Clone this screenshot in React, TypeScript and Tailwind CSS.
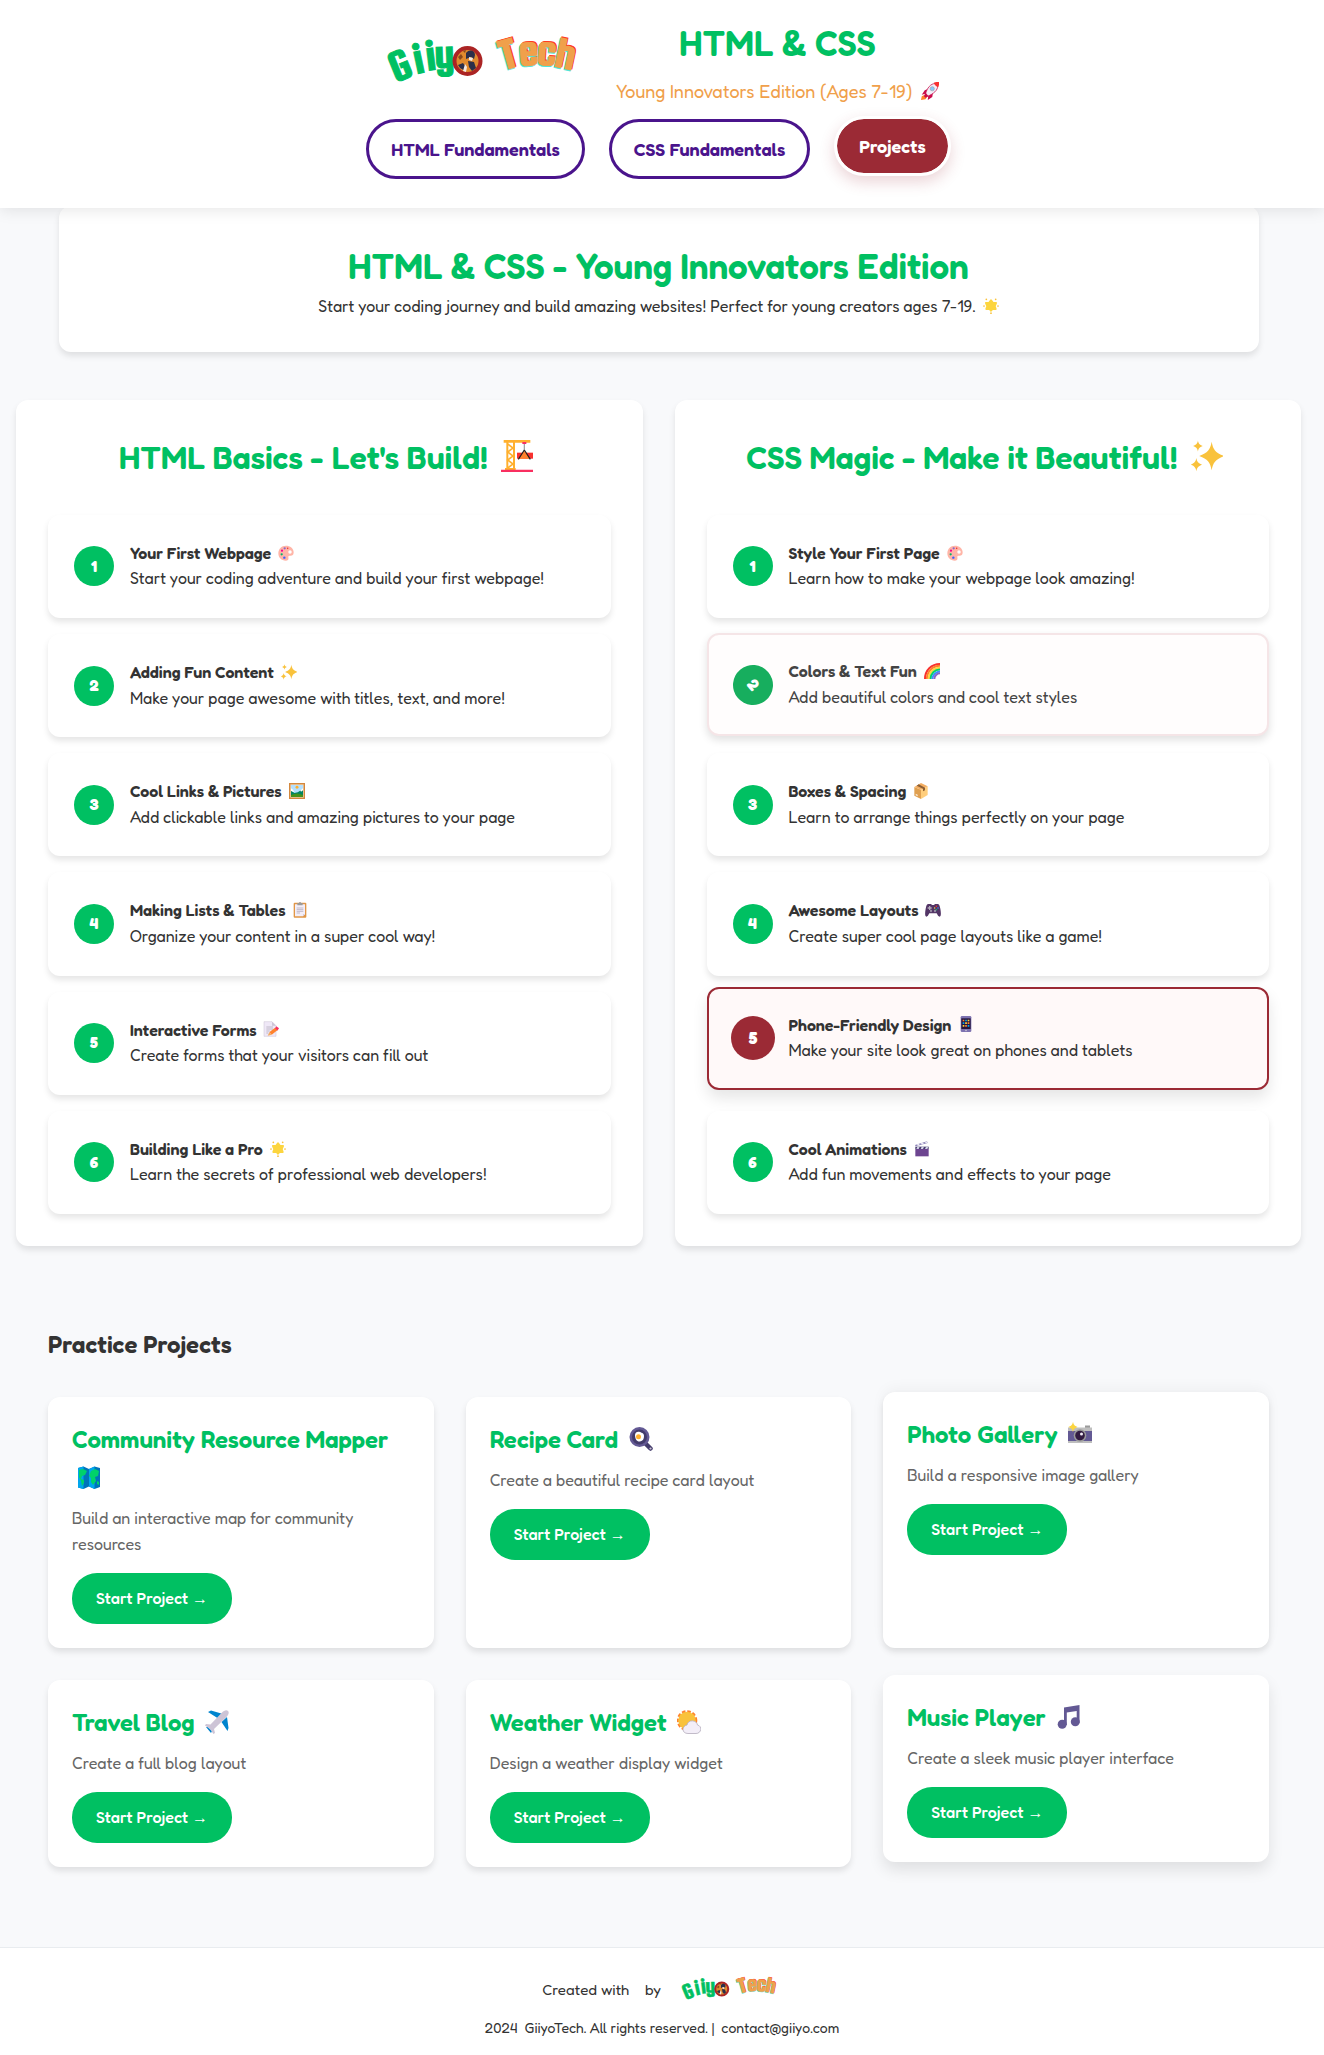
import React from 'react';
import type { ReactNode } from 'react';

const Sparkle = ({ x, y, r, fill = '#f9c23c' }: { x: number; y: number; r: number; fill?: string }) => (
  <path
    fill={fill}
    transform={`translate(${x} ${y}) scale(${r})`}
    d="M0-1.1C.12-.45.3-.27.95 0 .3.27.12.45 0 1.1-.12.45-.3.27-.95 0-.3-.27-.12-.45 0-1.1Z"
  />
);

const drawings: Record<string, ReactNode> = {
  rocket: (
    <>
      <path fill="#ca0b4a" d="M10 9 5 11l-4 6 7-2zM16 14l-1 6-6 4 1-8z" />
      <path fill="#ff822d" d="M5 17 1 19 0 24l6-1 2-3z" />
      <path fill="#f3eef8" stroke="#ca0b4a" strokeWidth="1" d="M6 16C8 8 13 2 19 2l3 3c1 6-6 11-13 14z" />
      <path fill="#f8312f" d="M17 1c3-1 6-1.500 7-1 .5 1 .3 4-1 7-3-1-5-3-6-6z" />
      <path fill="#ca0b4a" d="m6 14 4 5-4 2-2-2z" />
      <circle cx="15" cy="9" r="2.800" fill="#83cbff" stroke="#9b9b9b" strokeWidth=".8" />
    </>
  ),
  star: (
    <>
      <path fill="#fcd53f" stroke="#fcd53f" strokeWidth="3" strokeLinejoin="round" d="m12 3.500 2.500 3.500 5 .5-2 4.500 1.500 4.500-4.500-.5L12 19l-2.500-3-4.500.5L6.500 12l-2-4.500 5-.5z" />
      <g fill="#f9c23c">
        <circle cx="5" cy="2" r="1.300" /><circle cx="19" cy="2" r="1.300" />
        <circle cx="1.500" cy="12" r="1.300" /><circle cx="22.500" cy="12" r="1.300" />
        <circle cx="12" cy="22.700" r="1.300" />
      </g>
    </>
  ),
  crane: (
    <>
      <path fill="#ffb02e" d="M2 0h20v2H2zM3 21h8v2H3zM4 2h1.500v19H4zM9 2h1.500v19H9z" />
      <path fill="none" stroke="#ffb02e" strokeWidth="1.200" d="m5 3 4 3-4 3 4 3-4 3 4 3-4 3" />
      <path fill="#f92f60" d="M0 22.300h24V24H0zM16 1.500h3V3h-3z" />
      <path fill="none" stroke="#9b9b9b" strokeWidth=".9" d="M17.500 3v5" />
      <path fill="#f8312f" d="M12 9.500h12v4.500H12z" />
      <path fill="#ff822d" d="m17.500 8 4 6h-8z" />
      <path fill="none" stroke="#212121" strokeWidth=".9" d="m17.500 7.500-4.500 7M17.500 7.500l4.500 7" />
    </>
  ),
  sparkles: (
    <>
      <Sparkle x={15.5} y={12} r={9.800} />
      <Sparkle x={5.200} y={4.500} r={3.800} />
      <Sparkle x={4} y={18.500} r={4.500} />
    </>
  ),
  palette: (
    <>
      <path fill="#ffb5a7" d="M12 1C5 1 .5 6 .5 12.500S5 23.500 12 23.500c4 0 4-3 3.500-5s1-2.500 3.500-2.500 4.500-1 4.500-5C23.500 5 18 1 12 1z" />
      <circle cx="18" cy="10.500" r="2.600" fill="#fff" />
      <circle cx="10" cy="5" r="1.700" fill="#8d65c5" /><circle cx="6" cy="8.500" r="1.700" fill="#f70a8d" />
      <circle cx="5.500" cy="14" r="1.700" fill="#00b26b" /><circle cx="9.500" cy="19" r="1.800" fill="#3f5fff" />
      <circle cx="14.500" cy="5" r="1.200" fill="#f8312f" />
    </>
  ),
  picture: (
    <>
      <path fill="#d3883e" d="M0 0h24v24H0z" />
      <path fill="#f3d6b0" d="M2 2h20v20H2z" />
      <path fill="#b4e0ff" d="M3 3h18v18H3z" />
      <circle cx="12" cy="6.500" r="2.200" fill="#ffb02e" />
      <path fill="#008463" d="m3 11 5 4 5-1 8-5v12H3z" />
      <path fill="#44911b" d="M3 18c6-3 12-3 18 0v3H3z" />
      <path fill="#fff" d="m3 8 3 2 2 4-5-2zM21 8l-4 3 1 2 3-2z" />
    </>
  ),
  clipboard: (
    <>
      <rect x="2.500" y="1" width="19" height="22.500" rx="1.500" fill="#e19747" />
      <path fill="#f3eef8" d="M4.500 3.500h15v15l-3 3h-12z" />
      <path fill="#cdc4d6" d="M16.500 21.500v-3h3z" />
      <path fill="#9b9b9b" d="M8 1.500h2.500a1.500 1.500 0 0 1 3 0H16V5H8z" />
      <g stroke="#b4acbc" strokeWidth="1.200"><path d="M7 9h10M7 11.500h10M7 14h10M7 16.500h5" /></g>
    </>
  ),
  memo: (
    <>
      <path fill="#efe8f7" stroke="#cdc4d6" strokeWidth=".8" d="M1.500 1h12l6 6v16h-18z" />
      <path fill="#cdc4d6" d="M13.500 1v6h6z" />
      <g stroke="#b4acbc" strokeWidth="1.200"><path d="M5 9h10M5 12h10M5 15h5M5 18h3" /></g>
      <path fill="#f92f60" d="m20 8 4 3-2.500 3.500-4-3z" />
      <path fill="#ff822d" d="m17.500 10.500 4 3.500-8.500 6.500-3.500-3.500z" />
      <path fill="#f3ad61" d="m9.500 17 3.500 3.500L7 22z" />
    </>
  ),
  rainbow: (
    <g fill="none" strokeWidth="3">
      <path stroke="#f8312f" d="M1.500 24C1.500 11 11 1.500 24 1.500" />
      <path stroke="#ff822d" d="M4.300 24C4.300 13 13 4.300 24 4.300" />
      <path stroke="#fcd53f" d="M7.100 24C7.100 14.500 14.500 7.100 24 7.100" />
      <path stroke="#00d26a" d="M9.900 24C9.900 16 16 9.900 24 9.900" />
      <path stroke="#3f8cff" d="M12.700 24C12.700 18 18 12.700 24 12.700" />
      <path stroke="#8d65c5" d="M15.500 24C15.500 19.500 19.500 15.500 24 15.500" />
    </g>
  ),
  box: (
    <>
      <path fill="#e0a050" d="m2 6 10 4v14L2 19z" />
      <path fill="#ffce7c" d="m12 10 10-5v13l-10 6z" />
      <path fill="#f3ad61" d="m2 6 10-6 10 5-10 5z" />
      <path fill="#8b5e34" d="m5.500 4 3-2 9.500 5v4l-3 1.500V8.500z" />
      <path fill="#fff" opacity=".8" d="m4 16 3 1.500V20l-3-1.500z" />
    </>
  ),
  gamepad: (
    <>
      <path fill="#533566" d="M5 3h4l1.500 1.500h3L15 3h4c2 0 3 2 4 7s1.500 12-1 12c-2 0-3-2-4.500-5h-11C5 20 4 22 2 22c-2.500 0-2-7-1-12s2-7 4-7z" />
      <path fill="#b4acbc" d="M6 6h2v2h2v2H8v2H6v-2H4V8h2z" />
      <circle cx="17" cy="6.500" r="1.100" fill="#f8312f" /><circle cx="19.500" cy="9" r="1.100" fill="#3f8cff" />
      <circle cx="14.500" cy="9" r="1.100" fill="#fcd53f" /><circle cx="17" cy="11.500" r="1.100" fill="#00d26a" />
      <circle cx="9" cy="13.500" r="1.700" fill="#998ea4" /><circle cx="15" cy="13.500" r="1.700" fill="#998ea4" />
    </>
  ),
  phone: (
    <>
      <rect x="4" y="0" width="16" height="24" rx="2" fill="#7d72b0" />
      <path fill="#26153c" d="M5 3.500h14v16H5z" />
      <g fill="#ff822d"><path d="M7 5.500h2.500V8H7zM14.500 9.500H17V12h-2.500zM10.800 13.500h2.500V16h-2.500z" /></g>
      <g fill="#00a6ed"><path d="M10.800 5.500h2.500V8h-2.500zM7 9.500h2.500V12H7zM14.500 13.500H17V16h-2.500z" /></g>
      <g fill="#fcd53f"><path d="M14.500 5.500H17V8h-2.500zM10.800 9.500h2.500V12h-2.500zM7 13.500h2.500V16H7z" /></g>
      <circle cx="12" cy="21.700" r="1.200" fill="#cdc4d6" />
    </>
  ),
  clapper: (
    <>
      <path fill="#6d4590" d="M2 12h20v11H2z" />
      <path fill="#433b6b" d="M2 8.500h20V12H2z" />
      <path fill="#d3d3e8" d="M5 8.500h3.500L7 12H3.500zM11.500 8.500H15L13.500 12H10zM18 8.500h3.500L20 12h-3.500z" />
      <path fill="#8d84b8" d="m1.500 6 18-5.500 1 2.500L2.500 8z" />
      <path fill="#ececf6" d="m4 5.200 3-1 2 2-3 .9zM10 3.400l3-1 2 2-3 .9zM16 1.600l3-1 1 2.200-2 .6z" />
    </>
  ),
  map: (
    <>
      <path fill="#0074ba" d="m1 2 5.500-1.500L12 3l5.500-2.500L23 2v19l-5.500 2-5.500-2.500L6.500 23 1 21.500z" />
      <path fill="#00a6ed" d="m1 2 5.500-1.500V23L1 21.500zM12 3l5.500-2.500V23L12 20.500z" />
      <path fill="#00d26a" d="m2 4 4-1 4 2-2 4-3 1-1 3 3 1v3l-2 3-1-5-2-4zM14 5l4-2 4 2-1 5-3 1 1 4-3 4-2-3v-4l-2-2zM20 15l2 1v3l-2-1z" />
    </>
  ),
  pan: (
    <>
      <path stroke="#433b6b" strokeWidth="4.500" strokeLinecap="round" d="m16 16 5.500 5.500" />
      <circle cx="10.500" cy="10" r="10" fill="#635994" />
      <circle cx="10.500" cy="10" r="7.500" fill="#433b6b" />
      <path fill="#fff" d="M6 8c0-3 3-4 5-3s4 1 4 4-1 5-4 5.500S6 12 6 8z" />
      <circle cx="9.500" cy="9.800" r="2.500" fill="#ffb02e" />
      <circle cx="21.500" cy="21.500" r="1.100" fill="#cdc4d6" />
    </>
  ),
  camera: (
    <>
      <path fill="#9b9b9b" d="M17 3.500h5V6h-5z" />
      <path fill="#bebebe" d="M0 5.500h24V10H0z" />
      <path fill="#635994" d="M0 9h24v10H0z" />
      <path fill="#bebebe" d="M0 19h24v2H0z" />
      <circle cx="12" cy="13.500" r="6.300" fill="#9b9b9b" />
      <circle cx="12" cy="13.500" r="4.800" fill="#321b41" />
      <circle cx="13.500" cy="12" r="1.500" fill="#f3eef8" />
      <Sparkle x={5} y={5} r={4.800} fill="#fcd53f" />
    </>
  ),
  plane: (
    <>
      <path fill="#0084ce" d="m3 2 3-1.500L18 4l-4 5zM22 7l1.500 11-1 3-6-9zM3 17l4 4-1 2-5-6z" />
      <path fill="#cdc4d6" d="M23 1c1.500 1.500.5 4-2 6.500L9 19l1 4-1.500 1L5 19l-5-3.500L1 14l4.500.5L16.500 3C19 .5 21.500-.5 23 1z" />
    </>
  ),
  weather: (
    <>
      <circle cx="10" cy="10.500" r="9" fill="none" stroke="#ff822d" strokeWidth="2.600" strokeDasharray="3.500 1.800" />
      <circle cx="10" cy="10.500" r="8.800" fill="#f9c23c" />
      <path fill="#f3eef8" stroke="#b4acbc" strokeWidth=".8" d="M11 23.500c-6.500 0-6.500-7.500-1-8.500 1-6 10-5 10.500 0 5 1 4 8.500-1.500 8.500z" />
    </>
  ),
  notes: (
    <>
      <path fill="#635994" d="M7 2.500 22.500 0v18h-2.800V6L9.800 7.500V20H7z" />
      <circle cx="5.200" cy="19.300" r="4.500" fill="#635994" />
      <circle cx="18.300" cy="16.800" r="4.500" fill="#635994" />
    </>
  ),
};

const emojiSizes = {
  sm: 'ml-[3px] size-4',
  md: 'ml-1 size-[18px]',
  lg: 'ml-[5px] size-6',
  xl: 'ml-[6px] mr-[6px] size-8',
};

function Emoji({ name, size = 'sm' }: { name: string; size?: keyof typeof emojiSizes }) {
  return (
    <>
      {' '}
      <svg viewBox="0 0 24 24" role="img" aria-label={name} className={`inline-block align-[-0.12em] ${emojiSizes[size]}`}>
        {drawings[name]}
      </svg>
    </>
  );
}

const techLetters: [string, number, number, number][] = [
  ['T', 134, 49, -16],
  ['e', 151, 46, -4],
  ['c', 168, 46, 4],
  ['h', 185, 49, 12],
];

function TechWord({ color, dx, dy }: { color: string; dx: number; dy: number }) {
  return (
    <g fill={color} stroke={color} strokeWidth="1">
      {techLetters.map(([ch, x, y, r]) => (
        <text key={ch} transform={`translate(${x + dx} ${y + dy}) rotate(${r})`} textAnchor="middle">{ch}</text>
      ))}
    </g>
  );
}

function Logo({ className }: { className: string }) {
  return (
    <svg viewBox="0 0 210 70" role="img" aria-label="Giiyo Tech" className={`${className} overflow-visible font-['Squada_One','Fredoka',sans-serif] text-[45px]`}>
      <g fill="#00c062" stroke="#00c062" strokeWidth="1">
        <text transform="translate(27 60) rotate(-22)" textAnchor="middle">G</text>
        <text transform="translate(43 54) rotate(-12)" textAnchor="middle">i</text>
        <text transform="translate(54 51) rotate(-7)" textAnchor="middle">i</text>
        <text transform="translate(67 50) rotate(-2)" textAnchor="middle">y</text>
      </g>
      <circle cx="89.500" cy="42" r="13" fill="#e08a2e" stroke="#ab2424" strokeWidth="4" />
      <path fill="#2b2f4a" d="M88 34c3-4 9-3 9 2l-1 4-3-2-5 2zM80 46l5-2 3 4-1 4-5-3zM90 42l6 1 2 6-4 3-3-4z" />
      <path fill="#f4e9e4" d="m91 38 4 1-1 3-3-1zM87 45l2 3-1 5-3-1z" />
      <path fill="#8a4a1c" d="m80 38 3-3 2 3-3 3zM85 32l3-1-1 3z" />
      <TechWord color="#ff3b1f" dx={1} dy={-1} />
      <TechWord color="#4fe6dc" dx={-1} dy={1} />
      <TechWord color="#f0a04b" dx={0} dy={0} />
    </svg>
  );
}

type Lesson = { title: string; text: string; icon: string; state?: 'entering' | 'active' };

const htmlLessons: Lesson[] = [
  { title: 'Your First Webpage', text: 'Start your coding adventure and build your first webpage!', icon: 'palette' },
  { title: 'Adding Fun Content', text: 'Make your page awesome with titles, text, and more!', icon: 'sparkles' },
  { title: 'Cool Links & Pictures', text: 'Add clickable links and amazing pictures to your page', icon: 'picture' },
  { title: 'Making Lists & Tables', text: 'Organize your content in a super cool way!', icon: 'clipboard' },
  { title: 'Interactive Forms', text: 'Create forms that your visitors can fill out', icon: 'memo' },
  { title: 'Building Like a Pro', text: 'Learn the secrets of professional web developers!', icon: 'star' },
];

const cssLessons: Lesson[] = [
  { title: 'Style Your First Page', text: 'Learn how to make your webpage look amazing!', icon: 'palette' },
  { title: 'Colors & Text Fun', text: 'Add beautiful colors and cool text styles', icon: 'rainbow', state: 'entering' },
  { title: 'Boxes & Spacing', text: 'Learn to arrange things perfectly on your page', icon: 'box' },
  { title: 'Awesome Layouts', text: 'Create super cool page layouts like a game!', icon: 'gamepad' },
  { title: 'Phone-Friendly Design', text: 'Make your site look great on phones and tablets', icon: 'phone', state: 'active' },
  { title: 'Cool Animations', text: 'Add fun movements and effects to your page', icon: 'clapper' },
];

const itemStyles = {
  idle: 'border-transparent bg-white shadow-[0_4px_6px_rgba(0,0,0,0.1)]',
  entering: '-translate-y-px border-[#f5e5e7] bg-[#fffdfd] text-[#444] shadow-[0_4px_8px_rgba(0,0,0,0.12)]',
  active: '-translate-y-[5px] border-[#9b2a35] bg-[#fff9f9] shadow-[0_8px_15px_rgba(0,0,0,0.1)]',
};

const badgeStyles = {
  idle: 'bg-[#00c062]',
  entering: 'rotate-[50deg] bg-[#17ae5e]',
  active: 'scale-110 bg-[#9b2a35]',
};

function LessonColumn({ heading, icon, lessons }: { heading: string; icon: string; lessons: Lesson[] }) {
  return (
    <section className="rounded-xl bg-white p-8 shadow-[0_4px_6px_rgba(0,0,0,0.1)]">
      <h2 className="mb-8 text-center text-[32px] font-semibold text-[#00c062]">
        {heading}
        <Emoji name={icon} size="xl" />
      </h2>
      <ol className="flex flex-col gap-4">
        {lessons.map((lesson, i) => {
          const state = lesson.state ?? 'idle';
          return (
            <li key={lesson.title}>
              <a href={`#lesson-${i + 1}`} className={`flex items-center gap-4 rounded-xl border-2 p-6 ${itemStyles[state]}`}>
                <span className={`flex size-10 shrink-0 items-center justify-center rounded-full font-bold text-white ${badgeStyles[state]}`}>
                  {i + 1}
                </span>
                <span className="flex flex-col">
                  <strong className="font-semibold">
                    {lesson.title}
                    <Emoji name={lesson.icon} />
                  </strong>
                  <span>{lesson.text}</span>
                </span>
              </a>
            </li>
          );
        })}
      </ol>
    </section>
  );
}

const projects = [
  { title: 'Community Resource Mapper', text: 'Build an interactive map for community resources', icon: 'map', card: 'shadow-[0_4px_6px_rgba(0,0,0,0.1)]' },
  { title: 'Recipe Card', text: 'Create a beautiful recipe card layout', icon: 'pan', card: 'shadow-[0_4px_6px_rgba(0,0,0,0.1)]' },
  { title: 'Photo Gallery', text: 'Build a responsive image gallery', icon: 'camera', card: '-mt-[5px] shadow-[0_4px_6px_rgba(0,0,0,0.1),0_-4px_14px_rgba(0,0,0,0.04)]' },
  { title: 'Travel Blog', text: 'Create a full blog layout', icon: 'plane', card: 'shadow-[0_4px_6px_rgba(0,0,0,0.1)]' },
  { title: 'Weather Widget', text: 'Design a weather display widget', icon: 'weather', card: 'shadow-[0_4px_6px_rgba(0,0,0,0.1)]' },
  { title: 'Music Player', text: 'Create a sleek music player interface', icon: 'notes', card: '-translate-y-[5px] shadow-[0_8px_15px_rgba(0,0,0,0.1)]' },
];

export default function App() {
  return (
    <div className="min-h-screen bg-[#f8f9fb] font-['Fredoka','Liberation_Sans',sans-serif] text-base leading-[1.6] text-[#333]">
      <header className="relative z-10 bg-white pt-[15px] pr-[7px] pb-[29px] shadow-[0_2px_15px_rgba(0,0,0,0.1)]">
        <div className="flex flex-wrap items-start justify-center gap-7">
          <a href="#home" className="mt-1"><Logo className="h-[70px] w-[210px]" /></a>
          <div className="text-center">
            <h1 className="mb-[6px] text-[35px] font-semibold text-[#00c062]">HTML &amp; CSS</h1>
            <p className="text-lg text-[#f0a04b]">
              Young Innovators Edition (Ages 7-19)
              <Emoji name="rocket" size="md" />
            </p>
          </div>
        </div>
        <nav className="mt-[14px] flex flex-wrap justify-center gap-6 text-lg font-semibold">
          <a href="#html" className="rounded-[30px] border-3 border-[#4a148c] px-[22px] py-[13px] text-[#4a148c]">HTML Fundamentals</a>
          <a href="#css" className="rounded-[30px] border-3 border-[#4a148c] px-[22px] py-[13px] text-[#4a148c]">CSS Fundamentals</a>
          <a href="#projects" className="-translate-y-[3px] rounded-[30px] border-3 border-white bg-[#9b2a35] bg-clip-padding px-[22px] py-[13px] text-white shadow-[0_6px_15px_rgba(155,42,53,0.2)]">Projects</a>
        </nav>
      </header>

      <main className="-mt-[2px] pr-[23px] pl-4">
        <section className="mx-auto max-w-[1200px] rounded-xl bg-white p-8 text-center shadow-[0_4px_6px_rgba(0,0,0,0.1)]">
          <h2 className="text-[35px] font-semibold text-[#00c062]">HTML &amp; CSS - Young Innovators Edition</h2>
          <p>
            Start your coding journey and build amazing websites! Perfect for young creators ages 7-19.
            <Emoji name="star" />
          </p>
        </section>

        <div className="mt-12 grid grid-cols-1 gap-8 lg:grid-cols-2">
          <LessonColumn heading="HTML Basics - Let's Build!" icon="crane" lessons={htmlLessons} />
          <LessonColumn heading="CSS Magic - Make it Beautiful!" icon="sparkles" lessons={cssLessons} />
        </div>

        <section id="projects" className="mt-12 p-8">
          <h2 className="mb-[33px] text-2xl leading-[1.6] font-semibold">Practice Projects</h2>
          <div className="grid grid-cols-1 gap-8 md:grid-cols-2 lg:grid-cols-3">
            {projects.map((p) => (
              <article key={p.title} className={`rounded-xl bg-white p-6 ${p.card}`}>
                <h3 className="mb-2 text-2xl leading-[1.6] font-semibold text-[#00c062]">
                  {p.title}
                  <Emoji name={p.icon} size="lg" />
                </h3>
                <p className="mb-4 text-[#666]">{p.text}</p>
                <a href="#start" className="inline-block rounded-[25px] bg-[#00c062] px-6 py-[13px] align-top leading-[25px] font-medium text-white">Start Project →</a>
              </article>
            ))}
          </div>
        </section>
      </main>

      <footer className="mt-12 border-t border-[#e9ecef] bg-white pt-6 pb-4 text-center">
        <p className="flex h-9 items-start justify-center gap-4 text-[15px]">
          <span className="self-center">Created with</span>
          <span className="self-center">by</span>
          <Logo className="-mt-1 h-[35px] w-[105px]" />
        </p>
        <p className="mt-2 text-sm leading-[23px]">
          2024 &nbsp;GiiyoTech. All rights reserved. |&nbsp;{' '}
          <a href="mailto:contact@giiyo.com">contact@giiyo.com</a>
        </p>
      </footer>
    </div>
  );
}
